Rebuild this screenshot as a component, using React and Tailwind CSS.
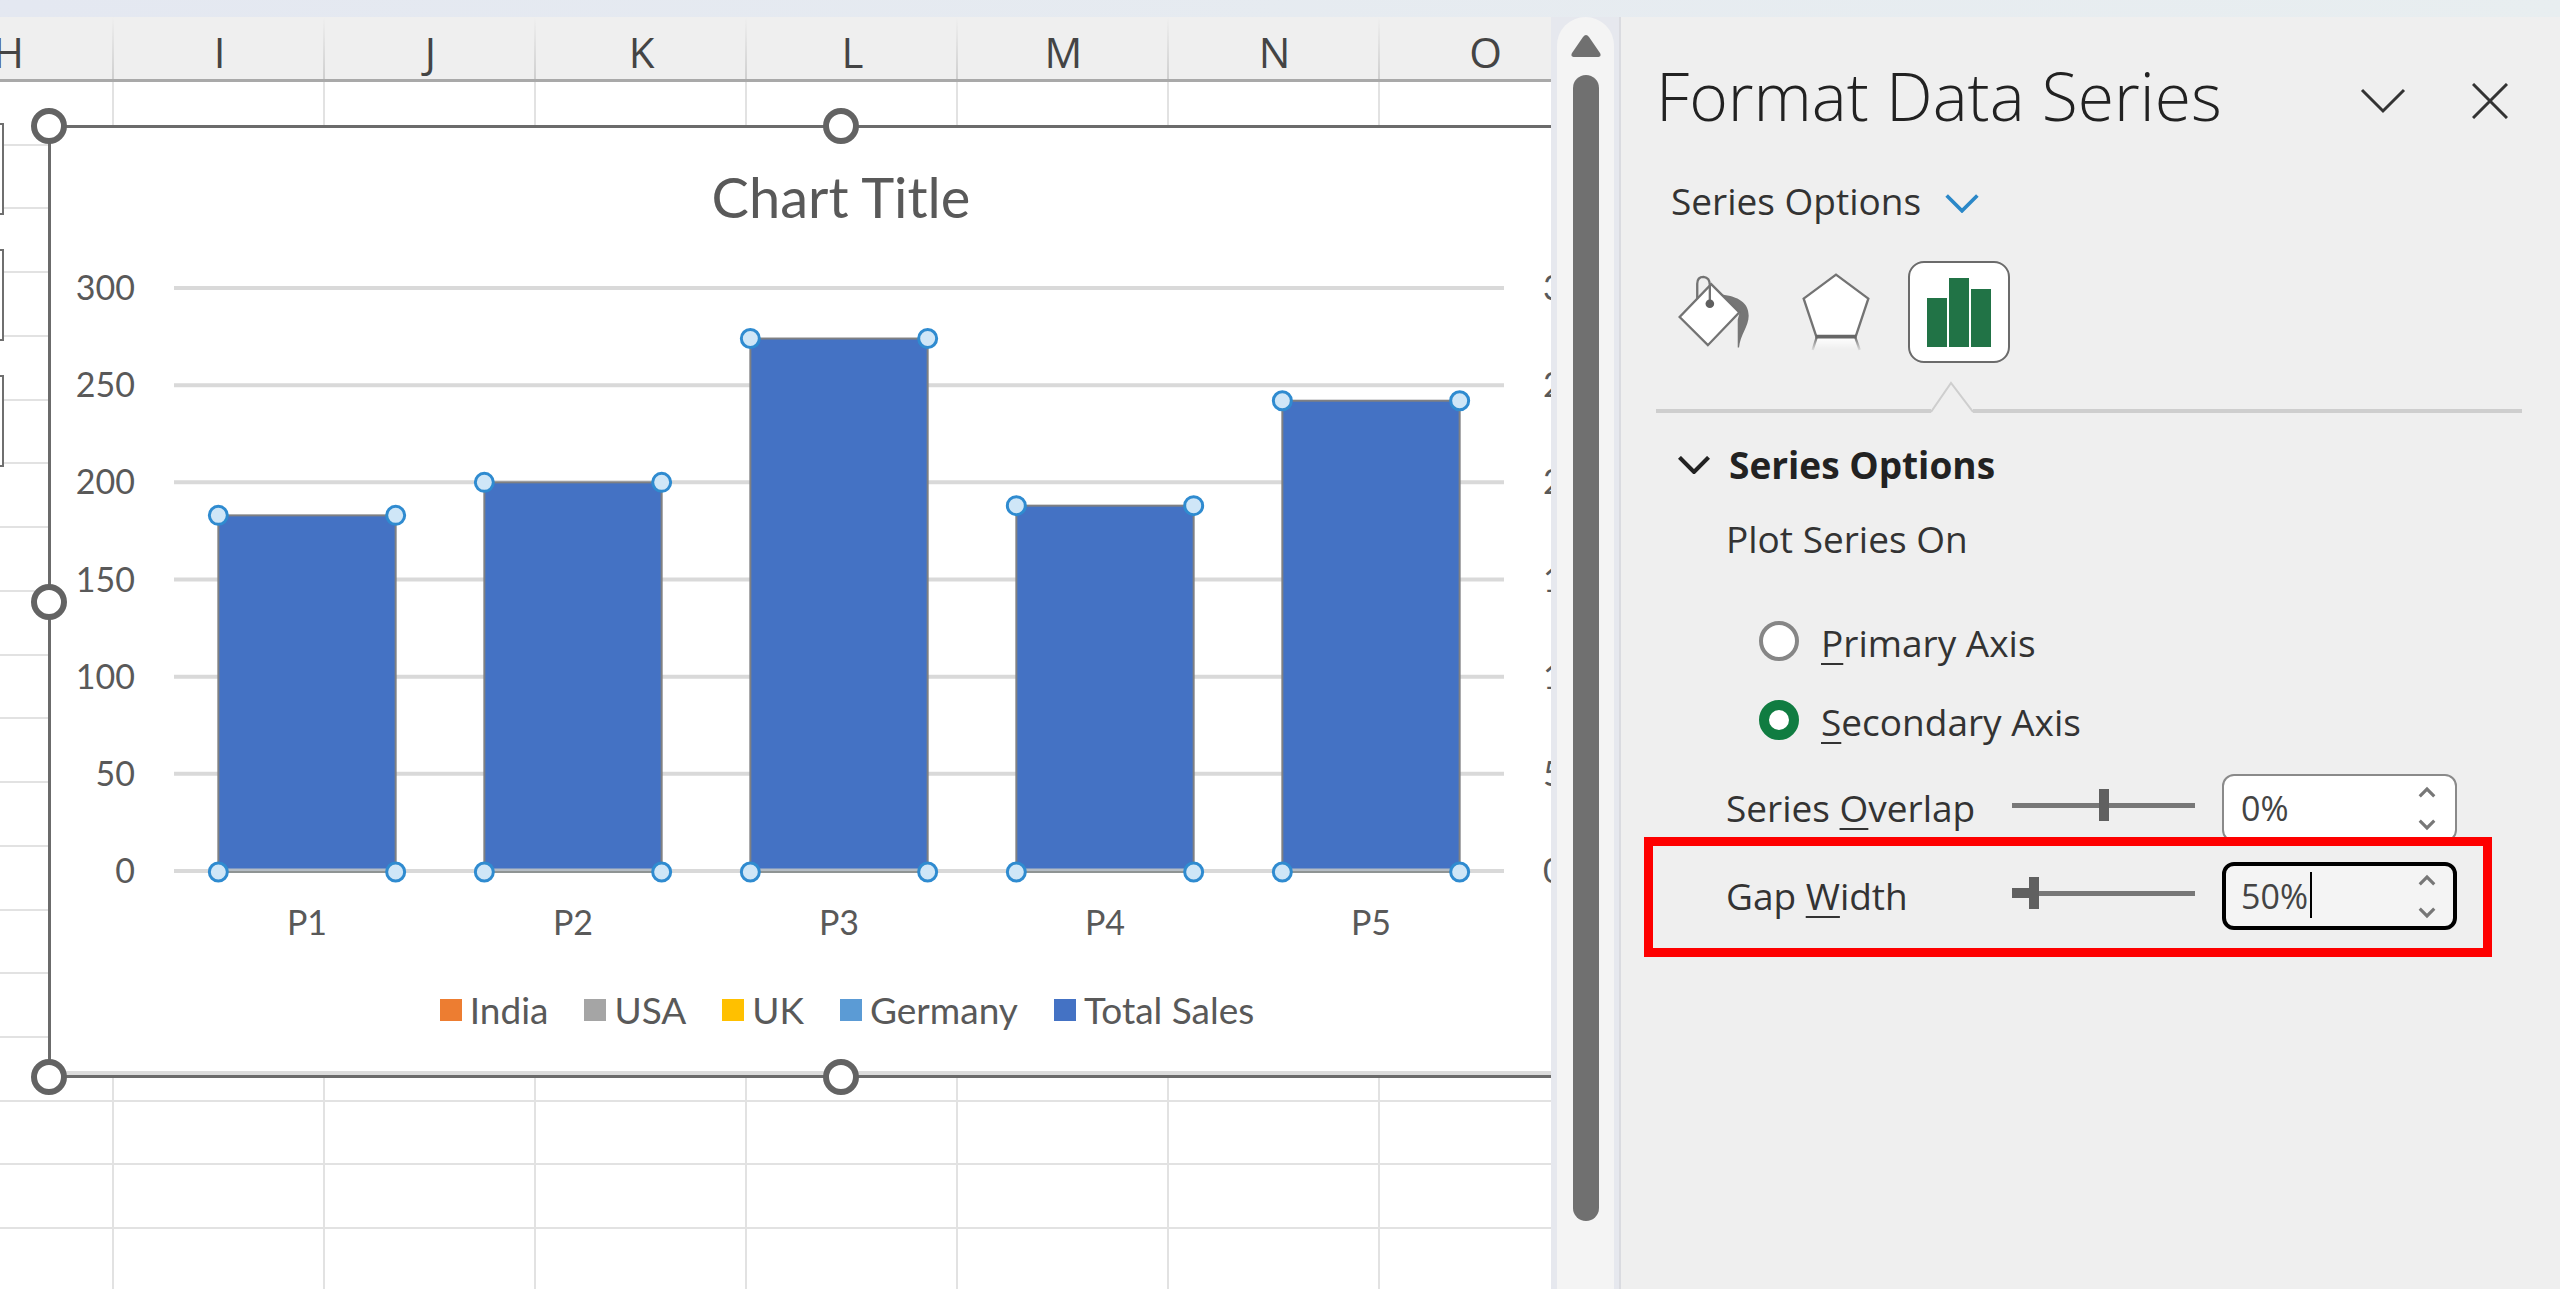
import React, { useState } from "react";

const columns = ["H", "I", "J", "K", "L", "M", "N", "O"];
const rows = Array.from({ length: 19 }, (_, i) => i + 1);

const sales = [
  { name: "P1", total: 183 },
  { name: "P2", total: 200 },
  { name: "P3", total: 274 },
  { name: "P4", total: 188 },
  { name: "P5", total: 242 },
];

const legend = [
  { label: "India", color: "bg-[#ed7d31]" },
  { label: "USA", color: "bg-[#a5a5a5]" },
  { label: "UK", color: "bg-[#ffc000]" },
  { label: "Germany", color: "bg-[#5b9bd5]" },
  { label: "Total Sales", color: "bg-[#4472c4]" },
];

const ticks = [0, 50, 100, 150, 200, 250, 300];

// plot area, in svg units
const PLOT = { left: 123, right: 1453, bottom: 631, top: 48 };
const yOf = (v) => PLOT.bottom - (v * (PLOT.bottom - PLOT.top)) / 300;

function Chevron({ className, strokeWidth = 3, up = false }) {
  return (
    <svg viewBox="0 0 46 26" className={className} fill="none" stroke="currentColor" strokeWidth={strokeWidth} aria-hidden="true">
      <path d={up ? "M2 24L23 3L44 24" : "M2 2L23 23L44 2"} />
    </svg>
  );
}

function Plot({ gapWidth }) {
  const slot = (PLOT.right - PLOT.left) / sales.length;
  const barWidth = slot / (1 + gapWidth / 100);
  return (
    <svg viewBox="0 0 1580 720" className="block h-[720px] w-full shrink-0" role="img" aria-label="Total sales by product">
      {ticks.map((t) => (
        <g key={t}>
          <line x1={PLOT.left} x2={PLOT.right} y1={yOf(t)} y2={yOf(t)} stroke="#d9d9d9" strokeWidth="4" />
          <text x="84" y={yOf(t) + 12} textAnchor="end" fontSize="34" fill="#595959">{t}</text>
          <text x="1492" y={yOf(t) + 12} fontSize="34" fill="#595959">{t}</text>
        </g>
      ))}
      {sales.map((s, i) => {
        const cx = PLOT.left + slot * (i + 0.5);
        const x1 = cx - barWidth / 2;
        const x2 = cx + barWidth / 2;
        const y = yOf(s.total);
        return (
          <g key={s.name}>
            <rect x={x1} y={y} width={barWidth} height={PLOT.bottom - y} fill="#4472c4" stroke="#7f8083" strokeWidth="2" />
            <line x1={x1} x2={x2} y1={PLOT.bottom - 1} y2={PLOT.bottom - 1} stroke="#b4bcc4" strokeWidth="3" />
            <line x1={x1} x2={x2} y1={PLOT.bottom + 1} y2={PLOT.bottom + 1} stroke="#8f9494" strokeWidth="2" />
            {[[x1, y], [x2, y], [x1, PLOT.bottom + 1], [x2, PLOT.bottom + 1]].map(([px, py]) => (
              <circle key={`${px}-${py}`} cx={px} cy={py} r="9" fill="#cfe6f7" stroke="#2f8bd0" strokeWidth="3" />
            ))}
            <text x={cx} y="695" textAnchor="middle" fontSize="34" fill="#595959">{s.name}</text>
          </g>
        );
      })}
    </svg>
  );
}

function Handle({ className }) {
  return <span className={`absolute size-9 rounded-full border-6 border-[#636363] bg-white ${className}`} />;
}

function Chart({ gapWidth }) {
  return (
    <div className="absolute top-[108px] left-[48px] flex h-[953px] w-[1586px] flex-col border-3 border-[#6b6b6b] bg-white font-['Lato',sans-serif] text-[#595959]">
      <h2 className="pt-[37px] pb-[11px] text-center text-[56px] leading-[64px]">Chart Title</h2>
      <Plot gapWidth={gapWidth} />
      <ul className="flex justify-center gap-9 pt-[26px] pl-3 text-[37px] leading-[48px]">
        {legend.map((l) => (
          <li key={l.label} className="flex items-center gap-2">
            <span className={`size-[22px] ${l.color}`} />
            {l.label}
          </li>
        ))}
      </ul>
      <div className="mt-auto h-1 bg-[#dcdcdc]" />
      <Handle className="-top-[20px] -left-[20px]" />
      <Handle className="-top-[20px] left-[772px]" />
      <Handle className="top-[456px] -left-[20px]" />
      <Handle className="-bottom-[20px] -left-[20px]" />
      <Handle className="-bottom-[20px] left-[772px]" />
    </div>
  );
}

function Sheet({ gapWidth }) {
  return (
    <section className="relative min-w-0 flex-1 overflow-hidden bg-white">
      <table className="-ml-[97px] h-[1276px] w-[1688px] table-fixed border-separate border-spacing-0">
        <thead>
          <tr className="h-[65px]">
            {columns.map((c) => (
              <th key={c} scope="col" className="border-b-3 border-[#a9a9a9] bg-[#efefef] bg-[linear-gradient(to_bottom,#efefef,#cfcfcf)] bg-[length:2px_100%] bg-right bg-no-repeat p-0 pt-2 text-[42px] leading-[54px] font-normal text-[#444444]">
                {c}
              </th>
            ))}
          </tr>
        </thead>
        <tbody>
          {rows.map((r) => (
            <tr key={r}>
              {columns.map((c) => (
                <td key={c} className="border-r-2 border-b-2 border-[#e2e2e2] p-0" />
              ))}
            </tr>
          ))}
        </tbody>
      </table>

      {/* shapes that run in from the left of the sheet */}
      <div className="absolute top-[106px] left-0 flex flex-col gap-[34px]">
        <div className="h-[92px] w-1 border-2 border-l-0 border-[#6f6f6f] bg-white" />
        <div className="h-[92px] w-1 border-2 border-l-0 border-[#6f6f6f] bg-white" />
        <div className="h-[92px] w-1 border-2 border-l-0 border-[#6f6f6f] bg-white" />
      </div>

      <Chart gapWidth={gapWidth} />
    </section>
  );
}

function ScrollBar() {
  return (
    <div className="flex w-[68px] shrink-0 bg-[#e6e8ee] pl-1.5">
      <div className="flex w-[57px] flex-col items-center rounded-t-full bg-[#f4f4f4]">
        <button type="button" aria-label="Scroll up" className="mt-[17px] text-[#707070]">
          <svg viewBox="0 0 30 24" className="block h-6 w-[30px]" fill="currentColor">
            <path d="M12 3Q15 -1 18 3L29 19Q31 23 26 23H4Q-1 23 1 19Z" />
          </svg>
        </button>
        <div className="mt-[17px] h-[1146px] w-[26px] rounded-full bg-[#707070]" />
      </div>
    </div>
  );
}

function FillIcon() {
  return (
    <svg viewBox="0 0 220 234" className="h-[78px] w-[73px]" aria-hidden="true">
      <path d="M135 64C184 70 216 88 216 128C216 160 190 186 187 224H183V140L189 118Z" fill="#767676" />
      <path d="M103 33L188 118L93 217L8 132Z" fill="#fff" stroke="#737373" strokeWidth="7" />
      <path d="M61 76V32Q61 11 80 11Q99 13 99 36V92" fill="none" stroke="#737373" strokeWidth="7" />
      <circle cx="99" cy="92" r="13" fill="#5f5f5f" />
    </svg>
  );
}

function EffectsIcon() {
  return (
    <svg viewBox="0 0 204 240" className="h-20 w-[68px]" aria-hidden="true">
      <defs>
        <linearGradient id="reflection" x1="0" y1="0" x2="0" y2="1">
          <stop offset="0" stopColor="#fff" />
          <stop offset="1" stopColor="#fff" stopOpacity="0" />
        </linearGradient>
        <linearGradient id="fade" gradientUnits="userSpaceOnUse" x1="0" y1="195" x2="0" y2="236">
          <stop offset="0" stopColor="#6f6f6f" />
          <stop offset="1" stopColor="#6f6f6f" stopOpacity="0.1" />
        </linearGradient>
      </defs>
      <path d="M44 196H160L170 232H34Z" fill="url(#reflection)" />
      <path d="M44 196L32 234M160 196L173 234" stroke="url(#fade)" strokeWidth="7" />
      <path d="M102 8L199 80L161 194H43L5 80Z" fill="#fff" stroke="#737373" strokeWidth="7" />
      <path d="M41 194H163" stroke="#666" strokeWidth="11" />
    </svg>
  );
}

function SeriesIcon() {
  return (
    <svg viewBox="0 0 65 69" className="h-[69px] w-[65px]" fill="#217346" aria-hidden="true">
      <rect x="0" y="20" width="20" height="49" />
      <rect x="22" y="0" width="20" height="69" />
      <rect x="44" y="11" width="20" height="58" />
    </svg>
  );
}

const keyClass = "underline decoration-2 underline-offset-[6px]";

function AxisOption({ id, checked, onChange, children }) {
  return (
    <div className="flex h-14 items-center gap-[22px]">
      <input
        type="radio"
        name="axis"
        id={id}
        checked={checked}
        onChange={onChange}
        className="mb-1 size-10 appearance-none rounded-full border-4 border-[#868686] bg-white checked:border-10 checked:border-[#107c41]"
      />
      <label htmlFor={id}>{children}</label>
    </div>
  );
}

function SliderRow({ id, label, min, max, value, onChange, fill = false, active = false, children }) {
  const percent = ((value - min) / (max - min)) * 100;
  return (
    <div className="relative flex h-[68px] items-center pl-[70px]">
      <label htmlFor={id} className="w-[286px]">{label}</label>
      <div className="relative mb-1.5 flex w-[183px] items-center">
        <input
          type="range"
          aria-label={`${id} slider`}
          min={min}
          max={max}
          value={value}
          onChange={(e) => onChange(Number(e.target.value))}
          className="h-8 w-full appearance-none bg-[linear-gradient(#777,#777)] bg-[length:100%_5px] bg-center bg-no-repeat [&::-webkit-slider-thumb]:h-8 [&::-webkit-slider-thumb]:w-2.5 [&::-webkit-slider-thumb]:appearance-none [&::-webkit-slider-thumb]:bg-[#606060]"
        />
        {fill && <span className="pointer-events-none absolute left-0 h-2.5 bg-[#606060]" style={{ width: `${percent}%` }} />}
      </div>
      <div className={`relative ml-[27px] flex h-[68px] w-[235px] items-center rounded-xl ${active ? "border-4 border-black bg-[#f4f4f4] pl-[15px]" : "border-2 border-[#8a8a8a] bg-white pl-[17px]"}`}>
        <input
          id={id}
          type="text"
          value={`${value}%`}
          onChange={(e) => onChange(Math.min(max, parseInt(e.target.value, 10) || 0))}
          className="h-full w-40 bg-transparent text-[34px] text-[#444444] caret-transparent outline-none"
        />
        {active && <span className="absolute top-[6px] left-[84px] h-[46px] w-[2px] bg-black" />}
        <div className={`ml-auto flex flex-col gap-[23px] text-[#777777] ${active ? "pr-[18px]" : "pr-5"}`}>
          <button type="button" aria-label="Increase" onClick={() => onChange(value + 1)}>
            <Chevron up strokeWidth={9} className="h-[9px] w-4 overflow-visible" />
          </button>
          <button type="button" aria-label="Decrease" onClick={() => onChange(value - 1)}>
            <Chevron strokeWidth={9} className="h-[9px] w-4 overflow-visible" />
          </button>
        </div>
      </div>
      {children}
    </div>
  );
}

function FormatPane({ overlap, setOverlap, gapWidth, setGapWidth }) {
  const [axis, setAxis] = useState("secondary");

  return (
    <aside className="w-[941px] shrink-0 border-l-2 border-[#dadbe0] bg-[#efefef] pr-[38px] pl-[35px] text-[37px] leading-[56px] text-[#333333]">
      <header className="mt-[38px] flex h-20 items-center justify-between">
        <h1 className="text-[66px] leading-[80px] font-light text-[#222222]">Format Data Series</h1>
        <div className="flex items-center gap-[66px] pt-3 pr-[14px]">
          <button type="button" aria-label="Task pane options">
            <Chevron className="h-[26px] w-[46px]" />
          </button>
          <button type="button" aria-label="Close">
            <svg viewBox="0 0 36 36" className="size-9" fill="none" stroke="currentColor" strokeWidth="3">
              <path d="M1 1L35 35M35 1L1 35" />
            </svg>
          </button>
        </div>
      </header>

      <button type="button" className="mt-[38px] flex h-14 items-center gap-6 pl-[15px]">
        Series Options
        <Chevron strokeWidth={5} className="mt-1 h-[19px] w-[34px] text-[#2b88c8]" />
      </button>

      <div className="mt-8 flex h-[102px] items-center pl-[21px]">
        <button type="button" aria-label="Fill &amp; Line" className="mr-[52px]"><FillIcon /></button>
        <button type="button" aria-label="Effects" className="mr-[38px]"><EffectsIcon /></button>
        <button type="button" aria-label="Series Options" aria-pressed="true" className="flex size-[102px] items-center justify-center rounded-2xl border-2 border-[#6b6b6b] bg-white">
          <SeriesIcon />
        </button>
      </div>

      <div className="mt-[18px] flex items-end">
        <div className="h-1 w-[275px] bg-[#cecece]" />
        <svg viewBox="0 0 42 32" className="h-8 w-[42px]" fill="none" stroke="#cecece" strokeWidth="2" aria-hidden="true">
          <path d="M0 31L20 2L42 31" />
        </svg>
        <div className="h-1 flex-1 bg-[#cecece]" />
      </div>

      <button type="button" aria-expanded="true" className="mt-6 flex h-14 items-center gap-[19px] pl-[22px] font-bold text-[#222222]">
        <Chevron strokeWidth={6} className="h-[18px] w-[32px]" />
        Series Options
      </button>

      <div role="radiogroup" aria-labelledby="plot-on" className="pt-[18px]">
        <p id="plot-on" className="h-14 pl-[70px]">Plot Series On</p>
        <div className="mt-12 flex flex-col gap-[23px] pl-[103px]">
          <AxisOption id="primary" checked={axis === "primary"} onChange={() => setAxis("primary")}>
            <span className={keyClass}>P</span>rimary Axis
          </AxisOption>
          <AxisOption id="secondary" checked={axis === "secondary"} onChange={() => setAxis("secondary")}>
            <span className={keyClass}>S</span>econdary Axis
          </AxisOption>
        </div>
      </div>

      <div className="mt-6 flex flex-col gap-5">
        <SliderRow
          id="overlap"
          label={<>Series <span className={keyClass}>O</span>verlap</>}
          min={-100}
          max={100}
          value={overlap}
          onChange={setOverlap}
        />
        <SliderRow
          id="gap"
          label={<>Gap <span className={keyClass}>W</span>idth</>}
          min={0}
          max={500}
          value={gapWidth}
          onChange={setGapWidth}
          fill
          active
        >
          {/* highlight box round the row */}
          <div className="pointer-events-none absolute -top-[25px] right-[30px] -left-3 h-[120px] border-9 border-[#fe0000]" />
        </SliderRow>
      </div>
    </aside>
  );
}

export default function App() {
  const [overlap, setOverlap] = useState(0);
  const [gapWidth, setGapWidth] = useState(50);

  return (
    <div className="flex h-screen flex-col overflow-hidden bg-[#efefef] font-['Open_Sans','Noto_Sans',sans-serif]">
      <div className="h-[17px] shrink-0 bg-linear-to-r from-[#e4e8f1] to-[#e8eef0]" />
      <main className="flex min-h-0 flex-1">
        <Sheet gapWidth={gapWidth} />
        <ScrollBar />
        <FormatPane overlap={overlap} setOverlap={setOverlap} gapWidth={gapWidth} setGapWidth={setGapWidth} />
      </main>
    </div>
  );
}
